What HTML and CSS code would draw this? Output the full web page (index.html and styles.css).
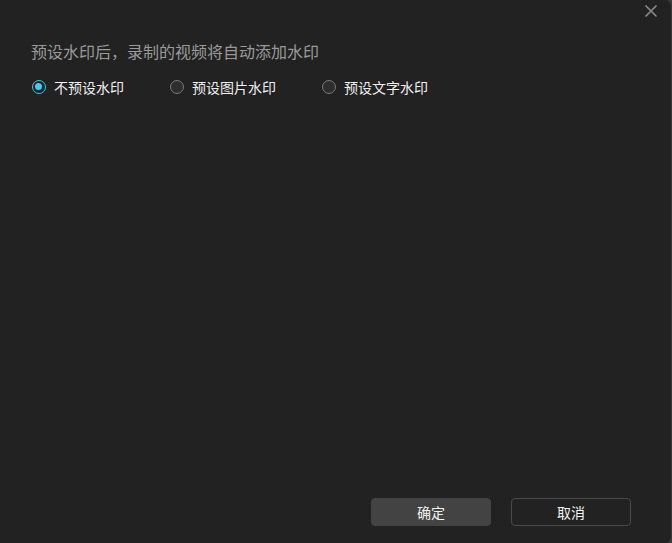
FILE: index.html
```html
<!DOCTYPE html>
<html lang="zh-CN">
<head>
<meta charset="utf-8">
<title>水印设置</title>
<link rel="stylesheet" href="styles.css">
</head>
<body>
<div class="dialog">
  <div class="header">
    <button class="close" aria-label="关闭">
      <svg width="14" height="14" viewBox="0 0 14 14"><path d="M1.5 1.5 L12.5 12.5 M12.5 1.5 L1.5 12.5" stroke="#8c8c8c" stroke-width="1.6" fill="none"/></svg>
    </button>
  </div>
  <div class="content">
    <p class="desc">预设水印后，录制的视频将自动添加水印</p>
    <div class="options">
      <label class="option"><span class="radio checked"></span><span class="label">不预设水印</span></label>
      <label class="option"><span class="radio"></span><span class="label">预设图片水印</span></label>
      <label class="option"><span class="radio"></span><span class="label">预设文字水印</span></label>
    </div>
  </div>
  <div class="footer">
    <button class="btn primary">确定</button>
    <button class="btn secondary">取消</button>
  </div>
</div>
</body>
</html>
```
FILE: styles.css
```css
html, body {
  margin: 0;
  padding: 0;
  background: #3a3a3a;
}
body {
  font-family: "Noto Sans CJK SC", "Noto Sans", sans-serif;
  width: 672px;
  height: 543px;
  overflow: hidden;
}
.dialog {
  width: 671px;
  height: 543px;
  background: #222222;
  border-radius: 0 6px 6px 0;
  display: flex;
  flex-direction: column;
  box-sizing: border-box;
}
.header {
  display: flex;
  justify-content: flex-end;
  padding: 4px 13px 0 0;
  height: 22px;
  box-sizing: border-box;
}
.close {
  width: 14px;
  height: 14px;
  padding: 0;
  margin: 0;
  border: none;
  background: none;
  display: flex;
  cursor: pointer;
}
.content {
  padding-left: 31px;
}
.desc {
  margin: 19px 0 0 0;
  font-size: 16px;
  line-height: 20px;
  color: #9a9a9a;
}
.options {
  display: flex;
  gap: 46px;
  margin: 16px 0 0 1px;
}
.option {
  display: flex;
  align-items: center;
  gap: 8px;
  height: 20px;
}
.radio {
  width: 14px;
  height: 14px;
  box-sizing: border-box;
  border-radius: 50%;
  border: 1.5px solid #7a7a7a;
  background: #2e2e2e;
  position: relative;
}
.radio.checked {
  border-color: #3cc7eb;
  background: #222222;
}
.radio.checked::after {
  content: "";
  position: absolute;
  left: 2px;
  top: 2px;
  width: 7px;
  height: 7px;
  border-radius: 50%;
  background: #3fcdf0;
}
.label {
  font-size: 14px;
  line-height: 20px;
  color: #f0f0f0;
}
.footer {
  margin-top: auto;
  display: flex;
  justify-content: flex-end;
  gap: 20px;
  padding: 0 40px 17px 0;
}
.btn {
  width: 120px;
  height: 28px;
  border-radius: 4px;
  font-family: inherit;
  font-size: 14px;
  color: #f2f2f2;
  padding: 0;
  cursor: pointer;
}
.btn.primary {
  background: #434343;
  border: 1px solid #434343;
}
.btn.secondary {
  background: #222222;
  border: 1px solid #4a4a4a;
}
```
